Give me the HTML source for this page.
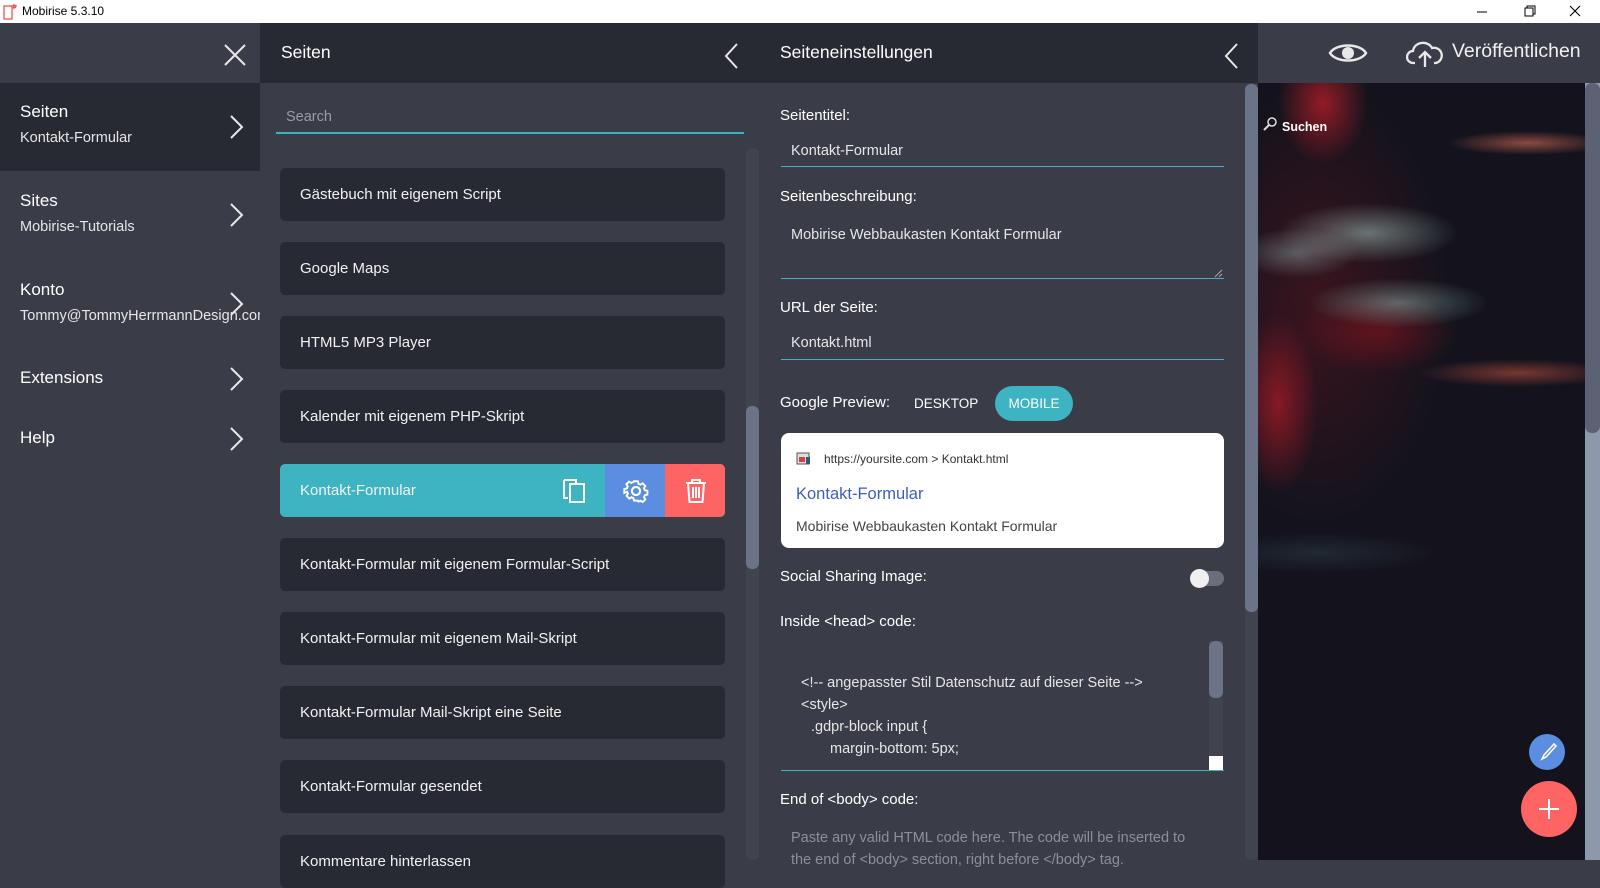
<!DOCTYPE html>
<html><head><meta charset="utf-8"><style>
*{margin:0;padding:0;box-sizing:border-box}
body{width:1600px;height:860px;overflow:hidden;background:#3a3d48;font-family:"Liberation Sans",sans-serif;color:#fff;position:relative}
.a{position:absolute}
.t{position:absolute;white-space:nowrap}
.item{position:absolute;left:280px;width:445px;height:53px;background:#272a32;border-radius:5px;font-size:15px;padding-left:20px;line-height:53px;color:#f2f2f2}
.lbl{position:absolute;left:780px;font-size:15px;color:#fff}
.val{position:absolute;left:791px;font-size:14.5px;color:#e6e6e6}
.ul{position:absolute;left:781px;width:443px;height:1px;background:#3eb3c1}
.code{position:absolute;font-size:14.5px;color:#e6e6e6;white-space:nowrap}
</style></head><body>
<div class="a" style="left:0;top:0;width:1600px;height:23px;background:#fff"></div>
<svg class="a" style="left:3px;top:3px" width="16" height="18"><rect x="1" y="3" width="8" height="13" fill="none" stroke="#e44" stroke-width="1.2"/><path d="M11 1v5M9 3h5M10 2l3 3M13 2l-3 3" stroke="#e44" stroke-width="1"/></svg>
<div class="t" style="left:22px;top:4px;font-size:12px;color:#000">Mobirise 5.3.10</div>
<svg class="a" style="left:1470px;top:2px" width="125" height="18"><path d="M7 10h10" stroke="#000"/><rect x="55" y="6" width="8" height="8" fill="none" stroke="#000"/><path d="M57 6V4h8v8h-2" fill="none" stroke="#000"/><path d="M100 4l10 10M110 4l-10 10" stroke="#000" stroke-width="1.1"/></svg>

<div class="a" style="left:0;top:23px;width:260px;height:837px;background:#3a3d48"></div>
<svg class="a" style="left:222px;top:42px" width="26" height="26"><path d="M3 3l20 20M23 3L3 23" stroke="#e8e8e8" stroke-width="2"/></svg>
<div class="a" style="left:0;top:83px;width:260px;height:88px;background:#272a32"></div>
<div class="t" style="left:20px;top:102px;font-size:17px">Seiten</div>
<div class="t" style="left:20px;top:130px;font-size:14.5px;color:#e6e6e6">Kontakt-Formular</div>
<div class="t" style="left:20px;top:191px;font-size:17px">Sites</div>
<div class="t" style="left:20px;top:219px;font-size:14.5px;color:#e6e6e6">Mobirise-Tutorials</div>
<div class="t" style="left:20px;top:280px;font-size:17px">Konto</div>
<div class="a" style="left:20px;top:308px;width:240px;overflow:hidden;white-space:nowrap;font-size:14.5px;color:#e6e6e6">Tommy@TommyHerrmannDesign.com</div>
<div class="t" style="left:20px;top:368px;font-size:17px">Extensions</div>
<div class="t" style="left:20px;top:428px;font-size:17px">Help</div>
<svg class="a" style="left:228px;top:0" width="20" height="460"><g fill="none" stroke="#e8e8e8" stroke-width="2"><path d="M3 116l11 11-11 11"/><path d="M3 204l11 11-11 11"/><path d="M3 293l11 11-11 11"/><path d="M3 368l11 11-11 11"/><path d="M3 428l11 11-11 11"/></g></svg>

<div class="a" style="left:260px;top:23px;width:500px;height:60px;background:#272a32"></div>
<div class="t" style="left:281px;top:42px;font-size:17.5px">Seiten</div>
<svg class="a" style="left:722px;top:42px" width="20" height="28"><path d="M15 2L4 14l11 12" fill="none" stroke="#e8e8e8" stroke-width="2"/></svg>
<div class="t" style="left:286px;top:109px;font-size:14.5px;color:#9a9ca4">Search</div>
<div class="a" style="left:276px;top:132px;width:468px;height:1.5px;background:#3eb3c1"></div>
<div class="a" style="left:746px;top:148px;width:13px;height:712px;background:#40444f;border-radius:6px"></div>
<div class="a" style="left:746px;top:406px;width:13px;height:163px;background:#6b7389;border-radius:6px"></div>
<div class="item" style="top:168px">Gästebuch mit eigenem Script</div>
<div class="item" style="top:242px">Google Maps</div>
<div class="item" style="top:316px">HTML5 MP3 Player</div>
<div class="item" style="top:390px">Kalender mit eigenem PHP-Skript</div>
<div class="item" style="top:464px;background:#3eb3c1;overflow:hidden">Kontakt-Formular
  <div class="a" style="left:325px;top:0;width:60px;height:53px;background:#5b8de0"></div>
  <div class="a" style="left:385px;top:0;width:60px;height:53px;background:#ff6464"></div>
  <svg class="a" style="left:282px;top:14px" width="26" height="26"><path d="M2 2h12v3M2 2v18h4" fill="none" stroke="#fff" stroke-width="2"/><rect x="8" y="6" width="14" height="18" fill="none" stroke="#fff" stroke-width="2"/></svg>
  <svg class="a" style="left:342px;top:13px" width="28" height="28" viewBox="0 0 24 24"><path d="M10 2h4l.6 2.6 2 .9 2.3-1.4 2.8 2.8-1.4 2.3.9 2 2.6.6v4l-2.6.6-.9 2 1.4 2.3-2.8 2.8-2.3-1.4-2 .9L14 22h-4l-.6-2.6-2-.9-2.3 1.4-2.8-2.8 1.4-2.3-.9-2L0 14v-4l2.6-.6.9-2-1.4-2.3 2.8-2.8 2.3 1.4 2-.9z" transform="translate(2 2) scale(.83)" fill="none" stroke="#fff" stroke-width="2"/><circle cx="12" cy="12" r="3.5" fill="none" stroke="#fff" stroke-width="1.8"/></svg>
  <svg class="a" style="left:403px;top:13px" width="26" height="28"><path d="M3 6h20M9 6V3h8v3M5 6l1.5 19h13L21 6M10 10v11M13 10v11M16 10v11" fill="none" stroke="#fff" stroke-width="2"/></svg>
</div>
<div class="item" style="top:538px">Kontakt-Formular mit eigenem Formular-Script</div>
<div class="item" style="top:612px">Kontakt-Formular mit eigenem Mail-Skript</div>
<div class="item" style="top:686px">Kontakt-Formular Mail-Skript eine Seite</div>
<div class="item" style="top:760px">Kontakt-Formular gesendet</div>
<div class="item" style="top:835px">Kommentare hinterlassen</div>

<div class="a" style="left:760px;top:23px;width:498px;height:60px;background:#272a32"></div>
<div class="t" style="left:780px;top:42px;font-size:17.5px">Seiteneinstellungen</div>
<svg class="a" style="left:1222px;top:42px" width="20" height="28"><path d="M15 2L4 14l11 12" fill="none" stroke="#e8e8e8" stroke-width="2"/></svg>
<div class="a" style="left:1245px;top:83px;width:13px;height:777px;background:#40444f;border-radius:6px"></div>
<div class="a" style="left:1245px;top:84px;width:13px;height:528px;background:#6b7389;border-radius:6px"></div>
<div class="lbl" style="top:107px">Seitentitel:</div>
<div class="val" style="top:143px">Kontakt-Formular</div>
<div class="ul" style="top:166px"></div>
<div class="lbl" style="top:188px">Seitenbeschreibung:</div>
<div class="val" style="top:227px">Mobirise Webbaukasten Kontakt Formular</div>
<div class="ul" style="top:278px"></div>
<svg class="a" style="left:1214px;top:269px" width="9" height="9"><path d="M1 8l7-7M5 8l3-3" stroke="#aaa"/></svg>
<div class="lbl" style="top:299px">URL der Seite:</div>
<div class="val" style="top:335px">Kontakt.html</div>
<div class="ul" style="top:359px"></div>
<div class="lbl" style="top:394px">Google Preview:</div>
<div class="t" style="left:914px;top:396px;font-size:13.5px">DESKTOP</div>
<div class="a" style="left:995px;top:386px;width:78px;height:35px;background:#3eb3c1;border-radius:18px;font-size:13.5px;text-align:center;line-height:35px">MOBILE</div>
<div class="a" style="left:781px;top:433px;width:443px;height:115px;background:#fff;border-radius:8px"></div>
<svg class="a" style="left:796px;top:452px" width="16" height="14"><rect x="1" y="1" width="12" height="11" fill="#ddd" stroke="#555"/><rect x="3" y="5" width="6" height="5" fill="#c44"/><rect x="10" y="5" width="4" height="7" fill="#357"/></svg>
<div class="t" style="left:824px;top:452px;font-size:12px;color:#333">https://yoursite.com &gt; Kontakt.html</div>
<div class="t" style="left:796px;top:485px;font-size:16.5px;color:#3b5fc0">Kontakt-Formular</div>
<div class="t" style="left:796px;top:518px;font-size:14px;color:#444">Mobirise Webbaukasten Kontakt Formular</div>
<div class="lbl" style="top:568px">Social Sharing Image:</div>
<div class="a" style="left:1192px;top:571px;width:32px;height:15px;background:#6b6f7a;border-radius:8px"></div>
<div class="a" style="left:1190px;top:569px;width:19px;height:19px;background:#f0f0f0;border-radius:50%"></div>
<div class="lbl" style="top:613px">Inside &lt;head&gt; code:</div>
<div class="code" style="left:801px;top:675px">&lt;!-- angepasster Stil Datenschutz auf dieser Seite --&gt;</div>
<div class="code" style="left:801px;top:697px">&lt;style&gt;</div>
<div class="code" style="left:811px;top:719px">.gdpr-block input {</div>
<div class="code" style="left:830px;top:741px">margin-bottom: 5px;</div>
<div class="a" style="left:781px;top:762px;width:425px;height:8px;background:#3a3d48"></div>
<div class="a" style="left:1209px;top:641px;width:14px;height:129px;background:#40444f"></div>
<div class="a" style="left:1209px;top:641px;width:14px;height:57px;background:#6b7389;border-radius:6px"></div>
<div class="a" style="left:1209px;top:756px;width:14px;height:14px;background:#fff"></div>
<div class="ul" style="top:770px"></div>
<div class="lbl" style="top:791px">End of &lt;body&gt; code:</div>
<div class="t" style="left:791px;top:830px;font-size:14.5px;color:#8c8f98">Paste any valid HTML code here. The code will be inserted to</div>
<div class="t" style="left:791px;top:852px;font-size:14.5px;color:#8c8f98">the end of &lt;body&gt; section, right before &lt;/body&gt; tag.</div>

<div class="a" style="left:1258px;top:23px;width:342px;height:60px;background:#3a3d48"></div>
<svg class="a" style="left:1328px;top:40px" width="40" height="26"><path d="M2 13C8 3 32 3 38 13 32 23 8 23 2 13z" fill="none" stroke="#e8e8e8" stroke-width="2.5"/><circle cx="20" cy="13" r="6" fill="#e8e8e8"/></svg>
<svg class="a" style="left:1406px;top:38px" width="38" height="30"><path d="M9 25H7a6 6 0 0 1 0-12 10 9 0 0 1 19-3 7 7 0 0 1 4 15h-2" fill="none" stroke="#e8e8e8" stroke-width="2.3"/><path d="M19 29V15M13 20l6-6 6 6" fill="none" stroke="#e8e8e8" stroke-width="2.3"/></svg>
<div class="t" style="left:1452px;top:40px;font-size:19.5px;color:#f0f0f0">Veröffentlichen</div>
<div class="a" style="left:1258px;top:83px;width:327px;height:777px;background:
radial-gradient(ellipse 45px 60px at 65px 20px,rgba(190,30,40,.75),transparent),
radial-gradient(ellipse 90px 30px at 110px 150px,rgba(170,210,200,.5),transparent),
radial-gradient(ellipse 90px 25px at 140px 220px,rgba(160,200,190,.45),transparent),
radial-gradient(ellipse 60px 25px at 40px 170px,rgba(160,200,200,.4),transparent),
radial-gradient(ellipse 80px 12px at 270px 60px,rgba(220,110,90,.6),transparent),
radial-gradient(ellipse 100px 14px at 260px 290px,rgba(220,90,70,.5),transparent),
radial-gradient(ellipse 40px 90px at 20px 320px,rgba(200,30,40,.6),transparent),
radial-gradient(ellipse 80px 40px at 120px 250px,rgba(140,20,30,.55),transparent),
radial-gradient(ellipse 130px 220px at 60px 220px,rgba(90,20,30,.55),transparent),
radial-gradient(ellipse 120px 20px at 60px 470px,rgba(60,90,100,.3),transparent),
#14131d"></div>
<svg class="a" style="left:1262px;top:116px" width="16" height="16"><circle cx="10" cy="6" r="4" fill="none" stroke="#ddd" stroke-width="1.5"/><path d="M7 9l-5 5" stroke="#ddd" stroke-width="2"/></svg>
<div class="t" style="left:1282px;top:120px;font-size:12.5px;font-weight:bold">Suchen</div>
<div class="a" style="left:1529px;top:734px;width:36px;height:36px;border-radius:50%;background:#5b8de0"></div>
<svg class="a" style="left:1535px;top:740px" width="24" height="24"><path d="M19 4L9 15l-2 4 4-2 10-11z" fill="none" stroke="#fff" stroke-width="1.6"/></svg>
<div class="a" style="left:1521px;top:781px;width:56px;height:56px;border-radius:50%;background:#ff6464"></div>
<svg class="a" style="left:1537px;top:797px" width="24" height="24"><path d="M12 2v20M2 12h20" stroke="#fff" stroke-width="2"/></svg>
<div class="a" style="left:1585px;top:83px;width:15px;height:777px;background:#8d98ad"></div>
<div class="a" style="left:1585px;top:83px;width:15px;height:350px;background:#5b6275;border-radius:7px"></div>
</body></html>
